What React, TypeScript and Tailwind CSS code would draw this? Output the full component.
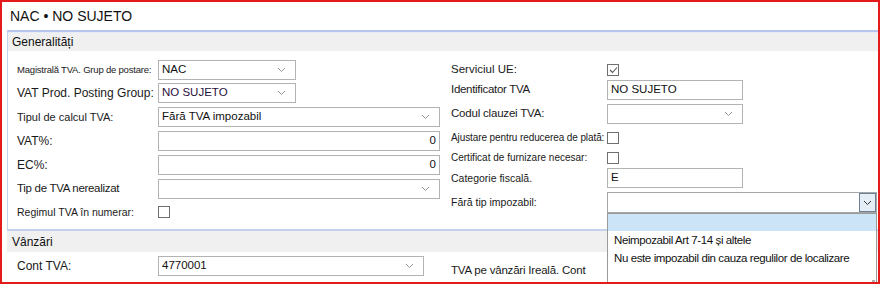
import React from "react";

const Chevron = ({ dark = false }: { dark?: boolean }) => (
  <svg width="9" height="6" viewBox="0 0 9 6" className="shrink-0">
    <path d="M1 1 L4.5 4.5 L8 1" fill="none" stroke={dark ? "#333" : "#999"} strokeWidth="1" />
  </svg>
);

const Select = ({ w, value, purple }: { w: string; value?: string; purple?: boolean }) => (
  <div className={`${w} h-[20px] border border-[#b3b3b3] bg-white flex items-center pl-[3px] pr-[9px] justify-between`}>
    <span className={`text-[11.5px] leading-none ${purple ? "text-[#2a0f3a]" : "text-[#111]"}`}>{value}</span>
    <Chevron />
  </div>
);

const Input = ({ w, value, right }: { w: string; value?: string; right?: boolean }) => (
  <div className={`${w} h-[20px] border border-[#b3b3b3] bg-white flex items-center px-[3px] ${right ? "justify-end" : ""}`}>
    <span className="text-[11.5px] leading-none text-[#111]">{value}</span>
  </div>
);

const Check = ({ checked }: { checked?: boolean }) => (
  <div className="w-[12px] h-[12px] border border-[#6f6f6f] bg-white flex items-center justify-center">
    {checked && (
      <svg width="9" height="8" viewBox="0 0 9 8">
        <path d="M1 4 L3.5 6.5 L8 1.5" fill="none" stroke="#555" strokeWidth="1.1" />
      </svg>
    )}
  </div>
);

const Row = ({ h, label, lw, size, children }: { h: string; label: string; lw: string; size: string; children: React.ReactNode }) => (
  <div className={`flex items-center ${h}`}>
    <div className={`${lw} shrink-0 ${size} text-[#1a1a1a] leading-none whitespace-nowrap`}>{label}</div>
    {children}
  </div>
);

export default function App() {
  return (
    <div
      className="w-[880px] h-[284px] border-2 border-[#e31b1b] bg-white relative overflow-hidden"
      style={{ fontFamily: '"Liberation Sans", Arial, sans-serif' }}
    >
      <div className="h-[28px] flex items-center pl-[8px] text-[14px] text-[#111]">NAC • NO SUJETO</div>
      <div className="ml-[5px] border-l border-t-2 border-b-2 border-l-[#c5d2ec] border-t-[#b7c5ec] border-b-[#c5d2ec]">
        <div className="h-[19px] bg-[#f0f0f0] flex items-center pl-[4px] text-[12px] text-[#111] border-t border-[#e8ecf8]">
          Generalități
        </div>
        <div className="flex pl-[9px] pt-[8px] pb-[6px]">
          <div className="flex flex-col w-[434px]">
            <Row h="h-[22px]" label="Magistrală TVA. Grup de postare:" lw="w-[141px]" size="text-[9.5px] tracking-[-0.2px]">
              <Select w="w-[138px]" value="NAC" />
            </Row>
            <Row h="h-[24px]" label="VAT Prod. Posting Group:" lw="w-[141px]" size="text-[12px]">
              <Select w="w-[138px]" value="NO SUJETO" purple />
            </Row>
            <Row h="h-[24px]" label="Tipul de calcul TVA:" lw="w-[141px]" size="text-[11px]">
              <Select w="w-[282px]" value="Fără TVA impozabil" />
            </Row>
            <Row h="h-[24px]" label="VAT%:" lw="w-[141px]" size="text-[12px]">
              <Input w="w-[282px]" value="0" right />
            </Row>
            <Row h="h-[24px]" label="EC%:" lw="w-[141px]" size="text-[12px]">
              <Input w="w-[282px]" value="0" right />
            </Row>
            <Row h="h-[24px]" label="Tip de TVA nerealizat" lw="w-[141px]" size="text-[11.5px] tracking-[-0.3px]">
              <Select w="w-[282px]" />
            </Row>
            <Row h="h-[22px]" label="Regimul TVA în numerar:" lw="w-[141px]" size="text-[10.5px]">
              <Check />
            </Row>
          </div>
          <div className="flex flex-col pt-[1px]">
            <Row h="h-[20px]" label="Serviciul UE:" lw="w-[156px]" size="text-[11.5px]">
              <Check checked />
            </Row>
            <Row h="h-[20px]" label="Identificator TVA" lw="w-[156px]" size="text-[11.5px] tracking-[-0.3px]">
              <Input w="w-[136px]" value="NO SUJETO" />
            </Row>
            <Row h="h-[28px]" label="Codul clauzei TVA:" lw="w-[156px]" size="text-[11.5px] tracking-[-0.2px]">
              <Select w="w-[136px]" />
            </Row>
            <Row h="h-[20px]" label="Ajustare pentru reducerea de plată:" lw="w-[156px]" size="text-[10px] tracking-[-0.1px]">
              <Check />
            </Row>
            <Row h="h-[20px]" label="Certificat de furnizare necesar:" lw="w-[156px]" size="text-[10px]">
              <Check />
            </Row>
            <Row h="h-[20px]" label="Categorie fiscală." lw="w-[156px]" size="text-[10.5px]">
              <Input w="w-[136px]" value="E" />
            </Row>
            <Row h="h-[29px]" label="Fără tip impozabil:" lw="w-[156px]" size="text-[10.5px]">
              <div className="w-[270px] h-[21px] border border-[#a6a6a6] bg-white flex items-center justify-end">
                <div className="w-[17px] h-[19px] border border-[#6d7f95] bg-[#e5eef7] flex items-center justify-center">
                  <Chevron dark />
                </div>
              </div>
            </Row>
          </div>
        </div>
      </div>
      <div className="ml-[5px] h-[21px] bg-[#f0f0f0] flex items-center pl-[5px] text-[12px] text-[#111]">Vânzări</div>
      <div className="flex items-center pl-[15px] h-[28px]">
        <div className="w-[141px] text-[12px] text-[#1a1a1a] leading-none">Cont TVA:</div>
        <Select w="w-[266px]" value="4770001" />
        <div className="ml-[27px] text-[11.5px] text-[#1a1a1a] leading-none mt-[10px] tracking-[-0.2px]">TVA pe vânzări Ireală. Cont</div>
      </div>

      <div className="absolute left-[605px] top-[211px] w-[270px] h-[72px] border border-[#9a9a9a] bg-white">
        <div className="h-[17px] bg-[#cce4f7]" />
        <div className="h-[18px] flex items-center pl-[6px] text-[11.5px] text-[#111] tracking-[-0.4px] mt-[1px]">Neimpozabil Art 7-14 și altele</div>
        <div className="h-[18px] flex items-center pl-[6px] text-[11.5px] text-[#111] tracking-[-0.4px]">Nu este impozabil din cauza regulilor de localizare</div>
        <div className="absolute right-[1px] bottom-[1px] w-[3px] h-[3px] bg-[#b0b0b0]" />
      </div>
    </div>
  );
}
